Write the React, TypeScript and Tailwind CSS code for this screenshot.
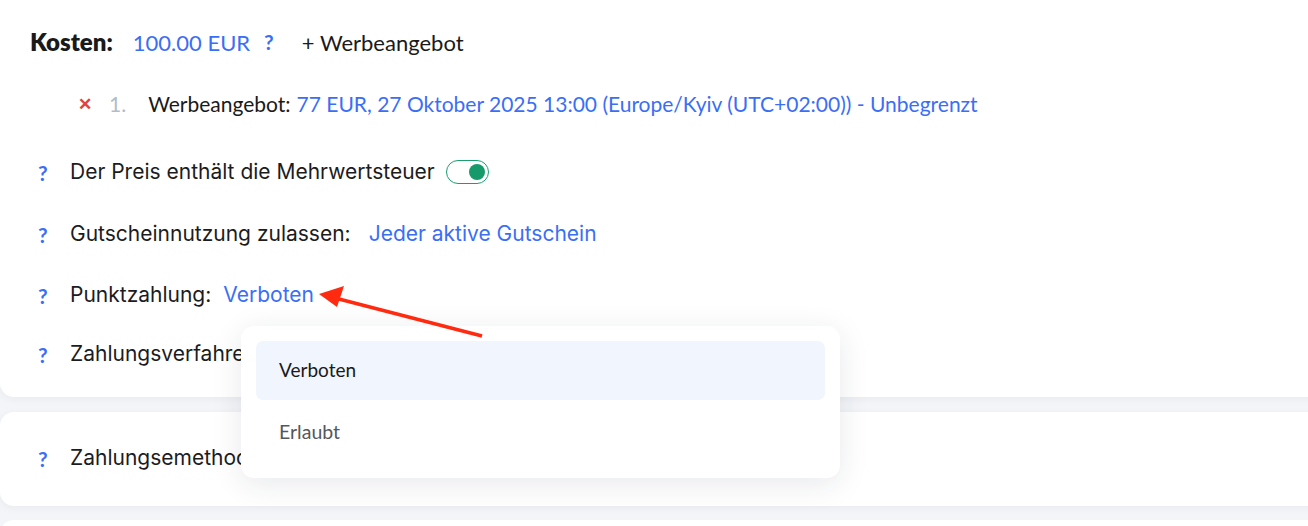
import React from "react";

const lato = { fontFamily: "Lato, 'Noto Sans', sans-serif" };
const inter = { fontFamily: "Inter, 'Noto Sans', sans-serif" };

function Q() {
  return (
    <span className="w-[12px] text-[21px] font-bold text-[#3b6ef6] leading-none" style={lato}>
      ?
    </span>
  );
}

function Row({ children, className = "" }: { children: React.ReactNode; className?: string }) {
  return (
    <div className={"h-[40px] flex items-center pl-[38px] text-[21px] text-[#1c1c1e] " + className} style={inter}>
      <Q />
      <div className="ml-[20px] flex items-center">{children}</div>
    </div>
  );
}

export default function App() {
  return (
    <div className="relative w-[1308px] h-[526px] overflow-hidden bg-[#f3f5f8]">
      <div className="w-[1330px] bg-white rounded-b-[14px] shadow-[0_2px_8px_rgba(30,40,70,0.05)] pt-[22px] pb-[23px] flex flex-col">
        <div className="h-[40px] flex items-center pl-[30px] text-[22px]" style={lato}>
          <span className="font-extrabold text-[#1a1a1a] text-[24px]">Kosten:</span>
          <span className="ml-[20px] text-[#3b6ef6]">100.00 EUR</span>
          <span className="ml-[14px] font-bold text-[#3b6ef6] text-[21px]">?</span>
          <span className="ml-[28px] text-[#1a1a1a]">+ Werbeangebot</span>
        </div>
        <div className="mt-[22px] h-[40px] flex items-center pl-[78px] text-[21px]" style={lato}>
          <span className="text-[#e0414a] font-bold text-[17px]">✕</span>
          <span className="ml-[17px] text-[#b3bccb]">1.</span>
          <span className="ml-[22px] text-[#1a1a1a]">Werbeangebot:</span>
          <span className="ml-[6px] text-[#3b6ef6]">
            77 EUR, 27 Oktober 2025 13:00 (Europe/Kyiv (UTC+02:00)) - Unbegrenzt
          </span>
        </div>
        <Row className="mt-[28px]">
          <span>Der Preis enthält die Mehrwertsteuer</span>
          <span className="ml-[11px] w-[43px] h-[24px] rounded-full border border-[#1a9e6e] flex items-center justify-end pr-[3px]">
            <span className="w-[16px] h-[16px] rounded-full bg-[#169a6b]" />
          </span>
        </Row>
        <Row className="mt-[22px]">
          <span>Gutscheinnutzung zulassen:</span>
          <span className="ml-[18px] text-[#3b6ef6]">Jeder aktive Gutschein</span>
        </Row>
        <Row className="mt-[21px]">
          <span>Punktzahlung:</span>
          <span className="ml-[12px] text-[#3b6ef6]">Verboten</span>
        </Row>
        <Row className="mt-[19px]">
          <span>Zahlungsverfahren</span>
        </Row>
      </div>

      <div className="mt-[15px] w-[1330px] bg-white rounded-[14px] shadow-[0_2px_8px_rgba(30,40,70,0.05)] pt-[26px] pb-[28px]">
        <Row>
          <span>Zahlungsemethoden</span>
        </Row>
      </div>

      <div className="mt-[14px] w-[1330px] h-[40px] bg-white rounded-[14px]" />

      {/* dropdown */}
      <div
        className="absolute left-[241px] top-[326px] w-[599px] h-[152px] bg-white rounded-[13px] shadow-[0_6px_30px_rgba(30,40,70,0.10)] p-[15px] flex flex-col"
        style={lato}
      >
        <div className="h-[59px] rounded-[7px] bg-[#f1f5fd] flex items-center pl-[23px] text-[19px] text-[#1a1a1a]">
          Verboten
        </div>
        <div className="h-[63px] flex items-center pl-[23px] text-[19.5px] text-[#55575c]">Erlaubt</div>
      </div>

      {/* arrow */}
      <svg className="absolute left-0 top-0 pointer-events-none" width="1308" height="526">
        <line x1="482" y1="336" x2="335" y2="298" stroke="#ff2a0f" strokeWidth="3.5" />
        <polygon points="319,294 344,286 337,307" fill="#ff2a0f" />
      </svg>
    </div>
  );
}
